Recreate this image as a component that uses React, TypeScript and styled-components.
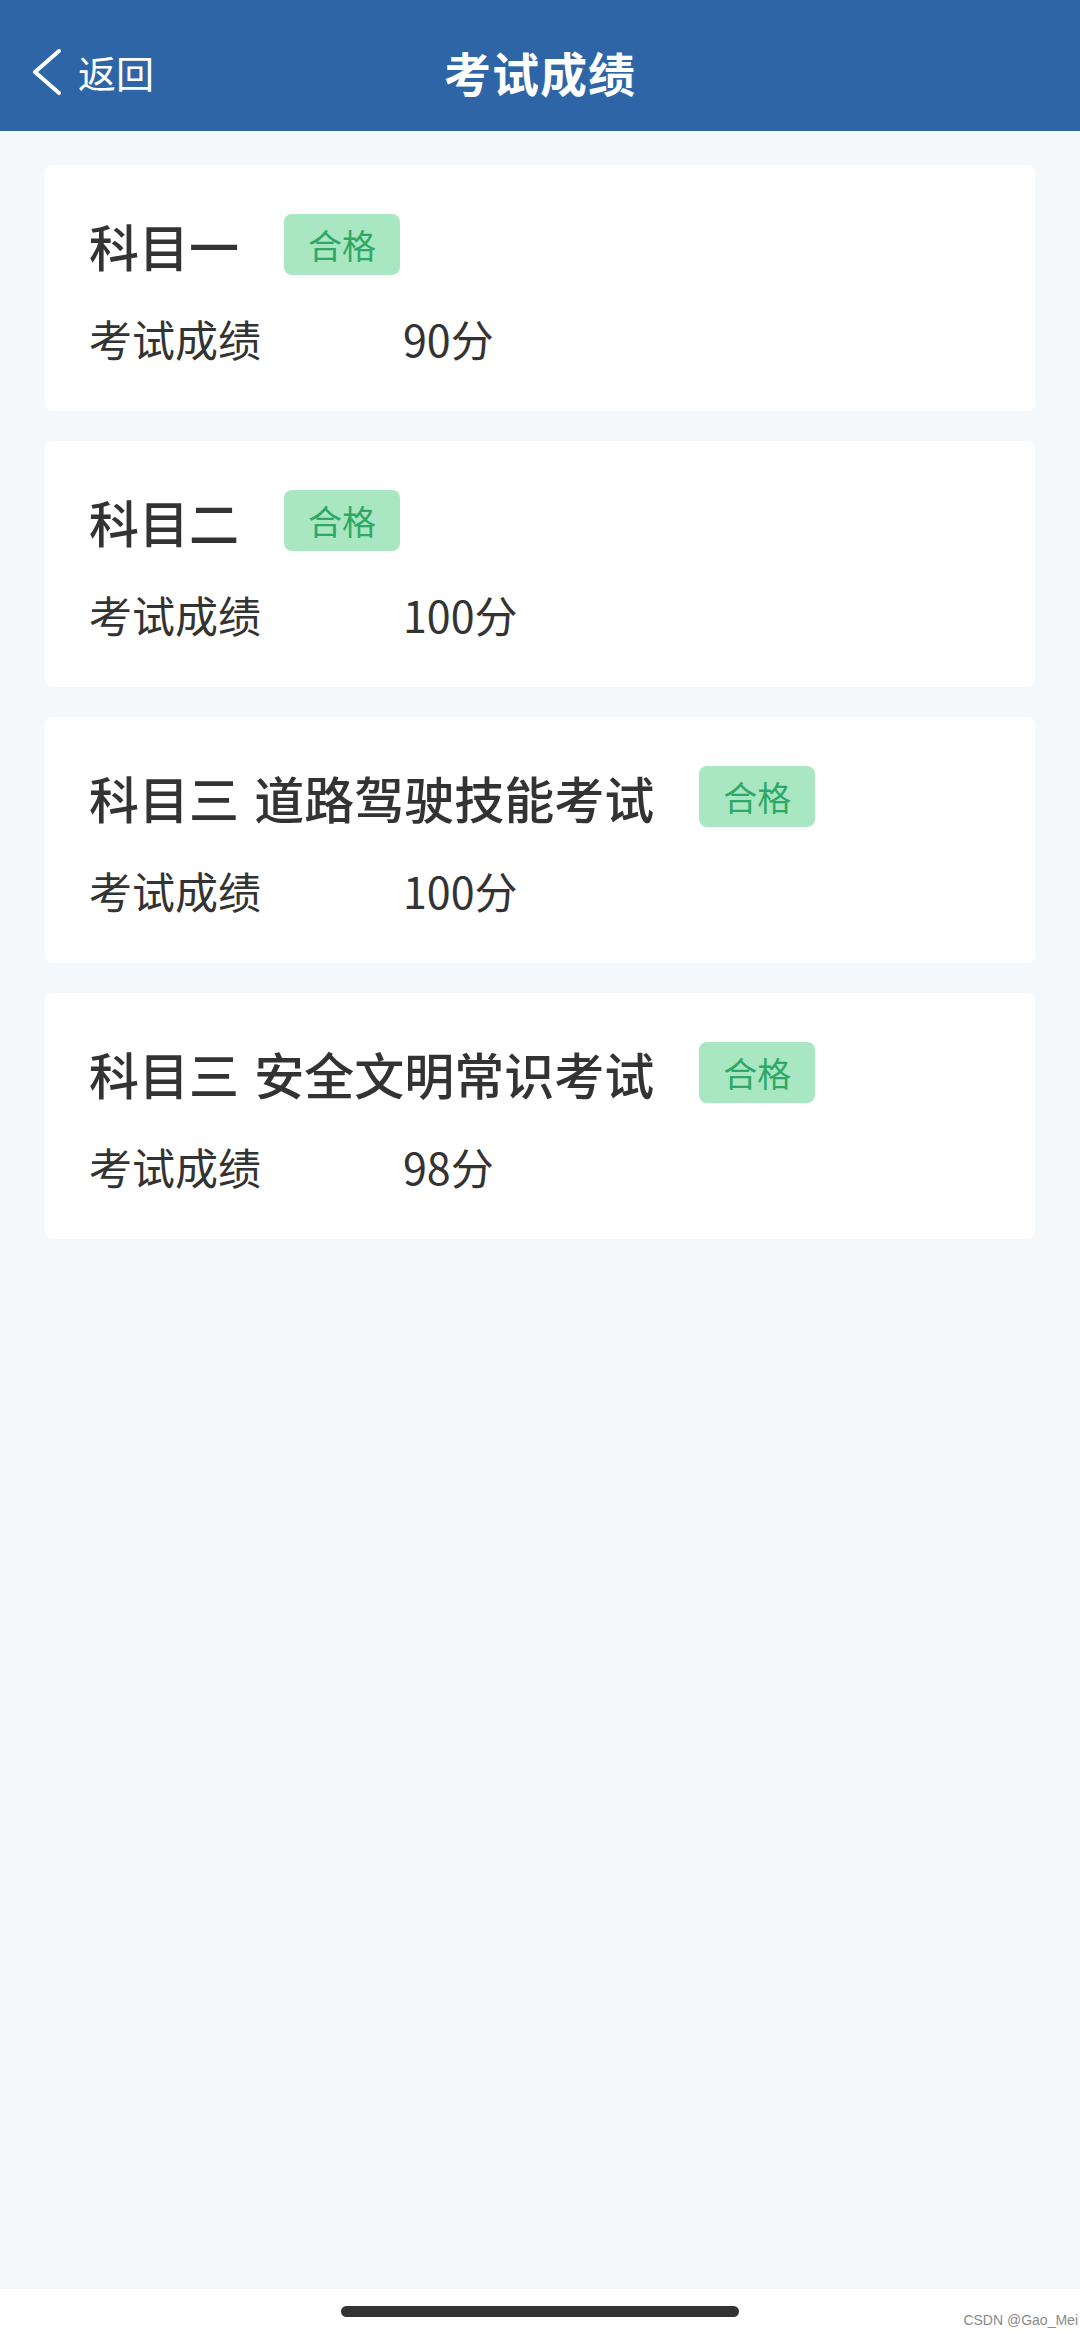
import React from 'react';
import styled, { createGlobalStyle } from 'styled-components';

const GlobalStyle = createGlobalStyle`
  html, body {
    margin: 0;
    padding: 0;
    background: #ffffff;
  }
  body {
    font-family: "Noto Sans CJK SC", "Noto Sans", "Liberation Sans", sans-serif;
  }
`;

const Page = styled.div`
  width: 1080px;
  min-height: 2332px;
  display: flex;
  flex-direction: column;
`;

const Header = styled.div`
  height: 131px;
  box-sizing: border-box;
  padding-top: 12px;
  background-color: #2d65a6;
  display: grid;
  grid-template-columns: 1fr auto 1fr;
  align-items: center;
  color: #ffffff;
`;

const Back = styled.div`
  display: flex;
  align-items: center;
  gap: 16px;
  padding-left: 32px;
  font-size: 38px;
  line-height: 1;
`;

const Title = styled.div`
  font-size: 47px;
  font-weight: 700;
  letter-spacing: 1px;
`;

const Body = styled.div`
  flex: 1;
  background-color: #f5f8fa;
  padding: 34px 45px;
  display: flex;
  flex-direction: column;
  gap: 30px;
`;

const Card = styled.div`
  background-color: #ffffff;
  border-radius: 8px;
  padding: 49px 44px 43px 44px;
  display: flex;
  flex-direction: column;
  gap: 34px;
`;

const TitleRow = styled.div`
  display: flex;
  align-items: center;
  gap: 45px;
  height: 61px;
`;

const Subject = styled.div`
  font-size: 50px;
  font-weight: 500;
  word-spacing: 4px;
  color: #333333;
  white-space: nowrap;
`;

const Badge = styled.div`
  width: 116px;
  height: 61px;
  border-radius: 8px;
  background-color: #a9e7c3;
  color: #2ea866;
  font-size: 34px;
  display: flex;
  align-items: center;
  justify-content: center;
`;

const ScoreRow = styled.div`
  display: grid;
  grid-template-columns: 314px auto;
  align-items: center;
  font-size: 43px;
  line-height: 59px;
  color: #333333;
`;

const Footer = styled.div`
  position: relative;
  height: 43px;
  background-color: #ffffff;
  display: flex;
  justify-content: center;
  padding-top: 17px;
  box-sizing: border-box;
`;

const HomeBar = styled.div`
  width: 398px;
  height: 11px;
  border-radius: 6px;
  background-color: #333333;
`;

const Watermark = styled.div`
  position: absolute;
  right: 2px;
  bottom: 4px;
  font-family: "Liberation Sans", sans-serif;
  font-size: 14px;
  color: #8a8a8a;
`;

const exams = [
  { name: '科目一', score: '90分' },
  { name: '科目二', score: '100分' },
  { name: '科目三 道路驾驶技能考试', score: '100分' },
  { name: '科目三 安全文明常识考试', score: '98分' },
];

export default function App() {
  return (
    <Page>
      <GlobalStyle />
      <Header>
        <Back>
          <svg width="30" height="46" viewBox="0 0 30 46">
            <polyline points="27,2 3,23 27,44" fill="none" stroke="#ffffff" strokeWidth="4" strokeLinecap="round" strokeLinejoin="round" />
          </svg>
          <span>返回</span>
        </Back>
        <Title>考试成绩</Title>
        <div />
      </Header>
      <Body>
        {exams.map((e) => (
          <Card key={e.name}>
            <TitleRow>
              <Subject>{e.name}</Subject>
              <Badge>合格</Badge>
            </TitleRow>
            <ScoreRow>
              <span>考试成绩</span>
              <span>{e.score}</span>
            </ScoreRow>
          </Card>
        ))}
      </Body>
      <Footer>
        <HomeBar />
        <Watermark>CSDN @Gao_Mei</Watermark>
      </Footer>
    </Page>
  );
}
